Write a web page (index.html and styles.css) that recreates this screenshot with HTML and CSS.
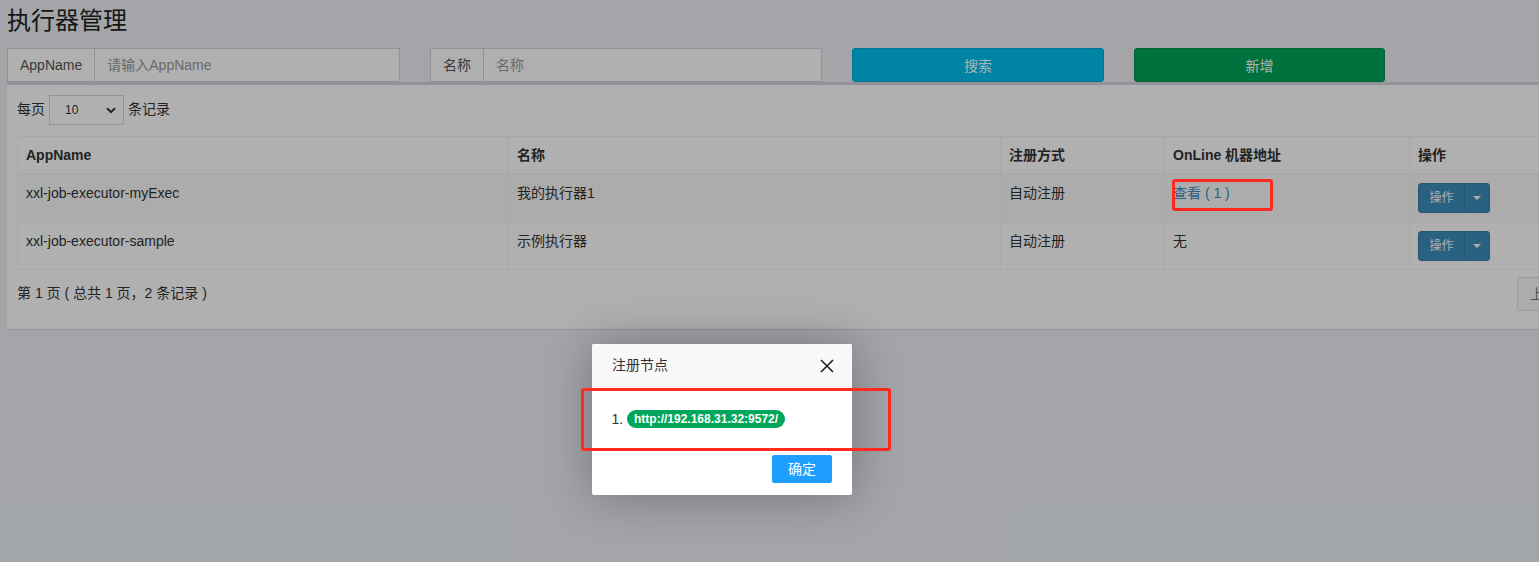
FILE: index.html
```html
<!DOCTYPE html>
<html lang="zh-CN">
<head>
<meta charset="utf-8">
<title>执行器管理</title>
<link rel="stylesheet" href="styles.css">
</head>
<body>
<div class="page">
  <h1 class="title">执行器管理</h1>
  <div class="search-row">
    <div class="input-group g1">
      <span class="addon">AppName</span>
      <span class="field placeholder">请输入AppName</span>
    </div>
    <div class="input-group g2">
      <span class="addon">名称</span>
      <span class="field placeholder">名称</span>
    </div>
    <button class="btn btn-info">搜索</button>
    <button class="btn btn-success">新增</button>
  </div>
  <div class="box">
    <div class="length">
      <span>每页</span>
      <span class="select"><span>10</span>
        <svg width="10" height="7" viewBox="0 0 10 7"><path d="M1 1.2 L5 5.2 L9 1.2" fill="none" stroke="#333" stroke-width="2"/></svg>
      </span>
      <span>条记录</span>
    </div>
    <table class="table">
      <colgroup>
        <col class="c1"><col class="c2"><col class="c3"><col class="c4"><col class="c5">
      </colgroup>
      <thead>
        <tr><th>AppName</th><th>名称</th><th>注册方式</th><th>OnLine 机器地址</th><th>操作</th></tr>
      </thead>
      <tbody>
        <tr class="odd">
          <td>xxl-job-executor-myExec</td><td>我的执行器1</td><td>自动注册</td>
          <td><a class="link">查看 ( 1 )</a></td>
          <td><span class="btn-group"><span class="bg-main">操作</span><span class="bg-caret"><i class="caret"></i></span></span></td>
        </tr>
        <tr>
          <td>xxl-job-executor-sample</td><td>示例执行器</td><td>自动注册</td>
          <td>无</td>
          <td><span class="btn-group"><span class="bg-main">操作</span><span class="bg-caret"><i class="caret"></i></span></span></td>
        </tr>
      </tbody>
    </table>
    <div class="footer-row">
      <div class="info">第 1 页 ( 总共 1 页，2 条记录 )</div>
      <div class="pagination"><span class="page-btn">上一页</span><span class="page-btn">下一页</span></div>
    </div>
  </div>
</div>

<div class="shade"></div>

<div class="layer">
  <div class="layer-title">注册节点
    <svg class="close" width="14" height="14" viewBox="0 0 14 14"><path d="M1 1 L13 13 M13 1 L1 13" stroke="#222" stroke-width="1.6" fill="none"/></svg>
  </div>
  <div class="layer-content">
    <ol class="nodes"><li><span class="badge">http://192.168.31.32:9572/</span></li></ol>
  </div>
  <div class="layer-btn"><a class="ok">确定</a></div>
</div>

<div class="mark mark-link"></div>
<div class="mark mark-modal"></div>
</body>
</html>
```

FILE: styles.css
```css
html, body {
  margin: 0;
  padding: 0;
}
body {
  width: 1539px;
  height: 562px;
  overflow: hidden;
  background: #ecf0f5;
  font-family: "Liberation Sans", "Noto Sans CJK SC", sans-serif;
  font-size: 14px;
  color: #333;
  position: relative;
}
.page {
  width: 1720px;
  padding-left: 7px;
}
.title {
  margin: 0 0 10px 0;
  padding-top: 4px;
  height: 34px;
  line-height: 34px;
  font-size: 24px;
  font-weight: normal;
  color: #222;
}
.search-row {
  display: flex;
  height: 34px;
}
.input-group {
  display: flex;
  height: 34px;
  box-sizing: border-box;
  border: 1px solid #d2d6de;
  background: #fff;
}
.g1 { width: 393px; margin-right: 30px; }
.g2 { width: 392px; margin-right: 30px; }
.addon {
  padding: 0 12px;
  line-height: 32px;
  border-right: 1px solid #d2d6de;
  color: #555;
  background: #fff;
}
.field {
  flex: 1;
  padding: 0 12px;
  line-height: 32px;
}
.placeholder { color: #999; }
.btn {
  height: 34px;
  box-sizing: border-box;
  border-radius: 3px;
  font-family: inherit;
  font-size: 14px;
  color: #fff;
  padding: 0;
  border: 1px solid transparent;
}
.btn-info {
  width: 252px;
  margin-right: 30px;
  background: #00c0ef;
  border-color: #00acd6;
}
.btn-success {
  width: 251px;
  background: #00a65a;
  border-color: #008d4c;
}
.box {
  background: #fff;
  border-top: 3px solid #d2d6de;
  box-shadow: 0 1px 1px rgba(0,0,0,0.1);
  padding: 10px 10px 8px 10px;
}
.length {
  display: flex;
  align-items: center;
  gap: 4px;
  height: 30px;
  line-height: 20px;
}
.length > span:first-child,
.length > span:last-child {
  position: relative;
  top: -1px;
}
.select {
  box-sizing: border-box;
  width: 75px;
  height: 30px;
  border: 1px solid #d2d6de;
  display: flex;
  align-items: center;
  justify-content: space-between;
  padding: 0 7px 0 15px;
  font-size: 12px;
  color: #333;
}
.table {
  margin-top: 11px;
  margin-bottom: 6px;
  border-collapse: collapse;
  table-layout: fixed;
  width: 1680px;
  border: 1px solid #f4f4f4;
}
.c1 { width: 491px; }
.c2 { width: 492px; }
.c3 { width: 164px; }
.c4 { width: 245px; }
.c5 { width: 288px; }
.table th, .table td {
  border: 1px solid #f4f4f4;
  padding: 8px;
  line-height: 20px;
  text-align: left;
  vertical-align: top;
}
.table td { height: 30.5px; box-sizing: content-box; }
.table th {
  font-weight: bold;
  border-bottom-width: 2px;
}
.table tbody tr.odd { background: #f9f9f9; }
.link { color: #3c8dbc; }
.btn-group {
  display: inline-flex;
  vertical-align: top;
  height: 30px;
  border-radius: 3px;
  overflow: hidden;
  background: #3c8dbc;
  border: 1px solid #367fa9;
  box-sizing: border-box;
  color: #fff;
  font-size: 12px;
}
.bg-main {
  width: 45px;
  text-align: center;
  line-height: 28px;
  border-right: 1px solid #367fa9;
}
.bg-caret {
  width: 24px;
  display: flex;
  align-items: center;
  justify-content: center;
}
.caret {
  width: 0;
  height: 0;
  border-left: 4px solid transparent;
  border-right: 4px solid transparent;
  border-top: 4px solid #fff;
}
.footer-row {
  display: flex;
  justify-content: space-between;
  align-items: flex-start;
}
.info {
  padding-top: 7px;
  line-height: 20px;
}
.pagination {
  margin: 1px 65px 10px 0;
  display: flex;
}
.page-btn {
  padding: 6px 12px;
  line-height: 20px;
  border: 1px solid #ddd;
  color: #777;
  background: #fafafa;
}
.page-btn:first-child { border-radius: 4px 0 0 4px; }
.page-btn:last-child { border-radius: 0 4px 4px 0; margin-left: -1px; }

.shade {
  position: absolute;
  left: 0; top: 0;
  width: 1539px;
  height: 562px;
  background: rgba(0,0,0,0.31);
}
.layer {
  position: absolute;
  left: 592px;
  top: 344px;
  width: 260px;
  background: #fff;
  border-radius: 2px;
  box-shadow: 1px 1px 50px rgba(0,0,0,0.3);
}
.layer-title {
  position: relative;
  height: 42px;
  line-height: 42px;
  padding: 0 80px 0 20px;
  border-bottom: 1px solid #eee;
  background: #f8f8f8;
  color: #333;
  font-size: 14px;
  border-radius: 2px 2px 0 0;
}
.close {
  position: absolute;
  right: 18px;
  top: 15px;
}
.layer-content {
  padding: 20px 20px 19px;
  line-height: 24px;
}
.nodes {
  margin: 0;
  padding: 0 0 0 15px;
}
.nodes li { color: #333; }
.badge {
  display: inline-block;
  background: #00a65a;
  color: #fff;
  font-weight: bold;
  font-size: 12px;
  line-height: 12px;
  padding: 3px 7px;
  border-radius: 10px;
  vertical-align: 1px;
}
.layer-btn {
  text-align: right;
  padding: 0 15px 12px;
}
.ok {
  display: inline-block;
  height: 28px;
  line-height: 26px;
  margin: 5px 5px 0;
  padding: 0 15px;
  background: #1e9fff;
  border: 1px solid #1e9fff;
  box-sizing: border-box;
  width: 60px;
  text-align: center;
  color: #fff;
  font-size: 14px;
  border-radius: 2px;
  vertical-align: top;
}
.mark {
  position: absolute;
  border: 3px solid #ff2a1f;
  border-radius: 3px;
  box-sizing: border-box;
}
.mark-link {
  left: 1172px;
  top: 179px;
  width: 101px;
  height: 32px;
}
.mark-modal {
  left: 581px;
  top: 388px;
  width: 310px;
  height: 63px;
}
```
